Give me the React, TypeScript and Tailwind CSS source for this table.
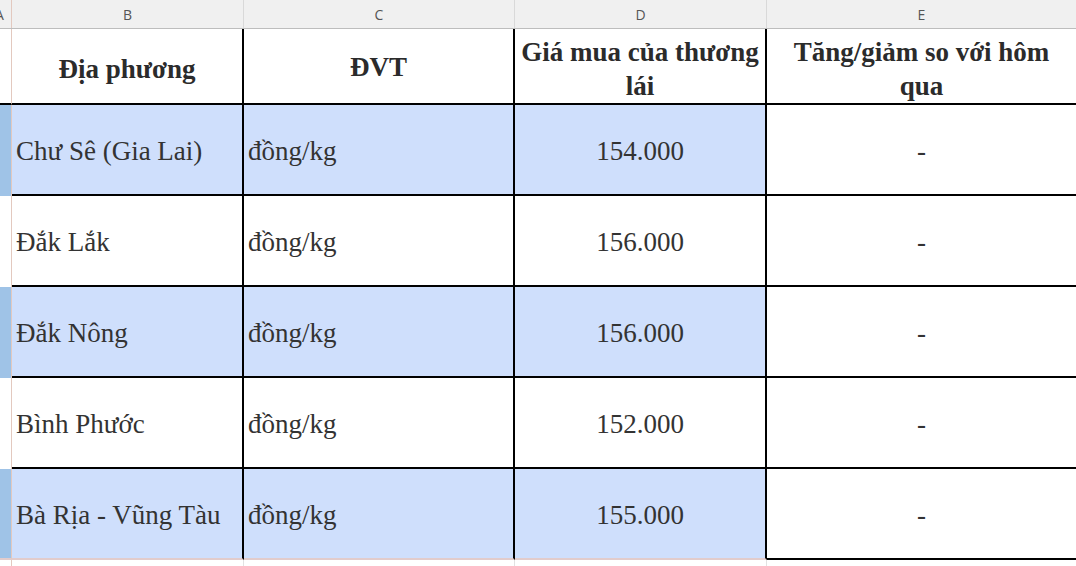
import React from "react";

const rows = [
  { name: "Chư Sê (Gia Lai)", price: "154.000", blue: true },
  { name: "Đắk Lắk", price: "156.000", blue: false },
  { name: "Đắk Nông", price: "156.000", blue: true },
  { name: "Bình Phước", price: "152.000", blue: false },
  { name: "Bà Rịa - Vũng Tàu", price: "155.000", blue: true },
];

const cols = "grid grid-cols-[12px_232px_271px_252px_1fr]";

export default function App() {
  return (
    <div className="w-[1076px] h-[566px] overflow-hidden bg-white font-['Liberation_Serif','Times_New_Roman',serif]">
      {/* column letters */}
      <div className={`${cols} h-[29px] bg-[#f0f0f0] border-b border-[#bdbdbd] text-[14px] text-[#555] font-['Open_Sans','Noto_Sans',sans-serif]`}>
        <div className="flex items-center overflow-hidden border-r border-[#e3c9bf]">
          <span className="ml-[-5px]">A</span>
        </div>
        <div className="flex items-center justify-center border-r border-[#d9d9d9]">B</div>
        <div className="flex items-center justify-center border-r border-[#d9d9d9]">C</div>
        <div className="flex items-center justify-center border-r border-[#d9d9d9]">D</div>
        <div className="flex items-center justify-center">E</div>
      </div>

      {/* header row */}
      <div className={`${cols} h-[76px] text-[27px] font-bold text-[#2b2b2b] leading-[34px] text-center`}>
        <div className="border-r border-[#e3c9bf] border-b-2 border-b-black"></div>
        <div className="flex items-center justify-center border-r-2 border-black border-b-2 pt-[6px]">Địa phương</div>
        <div className="flex items-center justify-center border-r-2 border-black border-b-2 pt-[2px]">ĐVT</div>
        <div className="flex items-center justify-center border-r-2 border-black border-b-2 pt-[5px]">
          Giá mua của thương
          <br />
          lái
        </div>
        <div className="flex items-center justify-center border-b-2 border-black pt-[5px]">
          Tăng/giảm so với hôm
          <br />
          qua
        </div>
      </div>

      {/* data rows */}
      {rows.map((r, i) => {
        const last = i === rows.length - 1;
        const cellBg = r.blue ? "bg-[#cfdffc]" : "bg-white";
        const bb = last ? "border-b-2 border-b-[#e2cccc]" : "border-b-2 border-b-black";
        return (
          <div key={i} className={`${cols} h-[91px] text-[27px] text-[#333]`}>
            <div
              className={`border-r border-[#e3c9bf] ${r.blue ? "bg-[#9fc3e7]" : "bg-white"} ${
                last ? "border-b-2 border-b-[#e2cccc]" : ""
              }`}
            ></div>
            <div className={`flex items-center pl-[4px] pt-[4px] border-r-2 border-r-black ${cellBg} ${bb}`}>
              {r.name}
            </div>
            <div className={`flex items-center pl-[4px] pt-[4px] border-r-2 border-r-black ${cellBg} ${bb}`}>
              đồng/kg
            </div>
            <div className={`flex items-center justify-center pt-[4px] border-r-2 border-r-black ${cellBg} ${bb}`}>
              {r.price}
            </div>
            <div className="flex items-center justify-center pt-[4px] border-b-2 border-black bg-white">-</div>
          </div>
        );
      })}

      {/* remaining gridline strip */}
      <div className={`${cols} h-[10px]`}>
        <div className="border-r border-[#e3c9bf]"></div>
        <div className="border-r border-[#e2e2e2]"></div>
        <div className="border-r border-[#e2e2e2]"></div>
        <div className="border-r border-[#e2e2e2]"></div>
        <div></div>
      </div>
    </div>
  );
}
